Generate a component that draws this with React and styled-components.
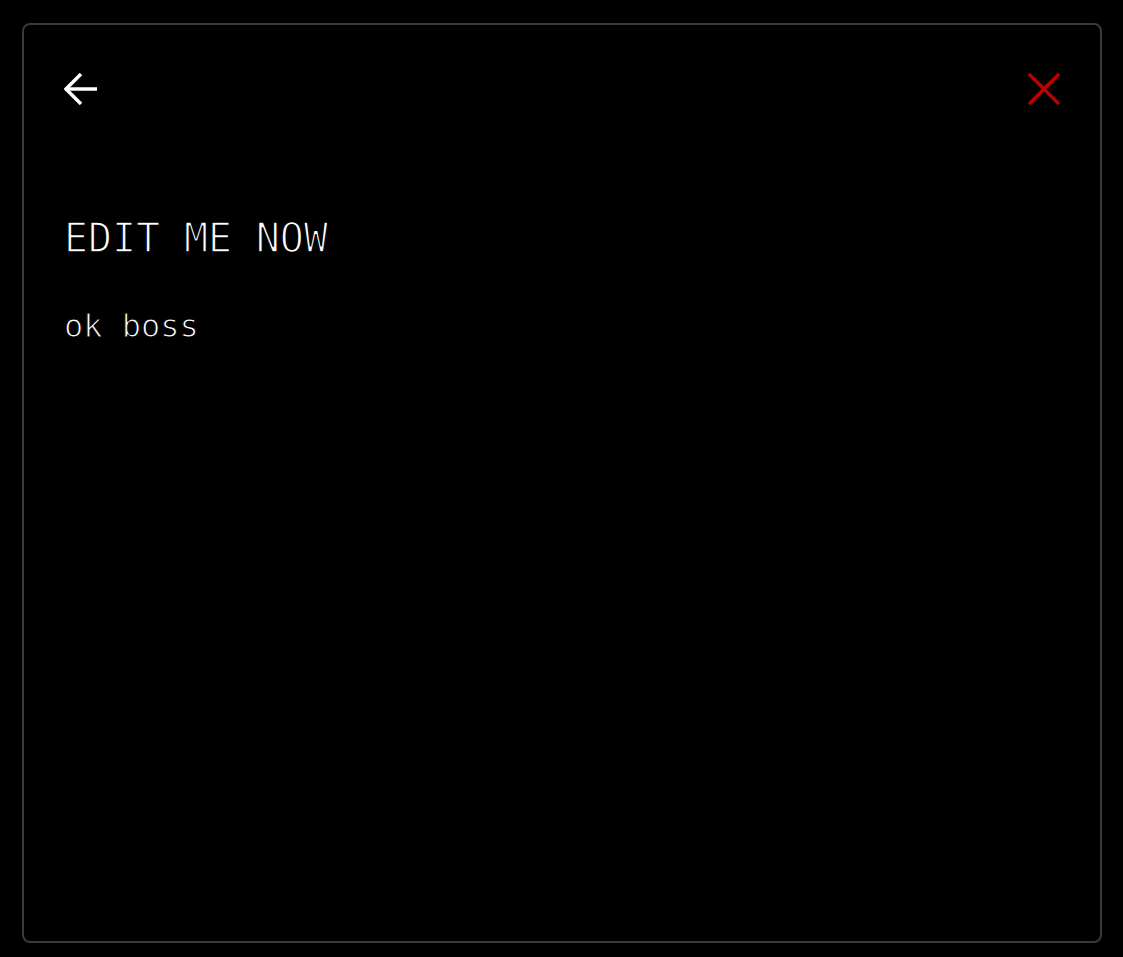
import React from "react";
import styled, { createGlobalStyle } from "styled-components";

const Global = createGlobalStyle`
  html, body { margin: 0; padding: 0; background: #000; }
  * { box-sizing: border-box; }
`;

const Page = styled.div`
  min-height: 100vh;
  padding: 23px 21px 14px 22px;
  background: #000;
  display: flex;
`;

const Card = styled.section`
  flex: 1;
  display: flex;
  flex-direction: column;
  border: 2px solid #3a3a3a;
  border-radius: 8px;
  background: #000;
  padding: 48px 38px;
  font-family: "DejaVu Sans Mono", "Liberation Mono", monospace;
  color: #fff;
`;

const Header = styled.header`
  display: flex;
  justify-content: space-between;
  align-items: center;
  padding: 0 2px;
`;

const IconButton = styled.button`
  background: none;
  border: 0;
  padding: 0;
  margin: 0;
  display: flex;
  cursor: pointer;
  color: ${(p) => p.$color};
`;

const Title = styled.h1`
  margin: 113px 0 0;
  padding-left: 2px;
  font-size: 40px;
  line-height: 40px;
  font-weight: 400;
  letter-spacing: -0.1px;
  -webkit-text-stroke: 1.4px #000;
`;

const Body = styled.p`
  margin: 52px 0 0;
  padding-left: 2px;
  font-size: 32px;
  line-height: 32px;
  font-weight: 400;
  letter-spacing: 0;
  -webkit-text-stroke: 1.1px #000;
`;

const ArrowLeft = () => (
  <svg width="33" height="32" viewBox="0 0 33 32" fill="none" stroke="currentColor" strokeWidth="3.5">
    <path d="M17 1 L2 16 L17 31" strokeLinejoin="miter" />
    <path d="M2.5 16 H33" />
  </svg>
);

const CloseX = () => (
  <svg width="32" height="32" viewBox="0 0 32 32" fill="none" stroke="currentColor" strokeWidth="3.4" strokeLinecap="round">
    <path d="M2 2 L30 30 M30 2 L2 30" />
  </svg>
);

export default function App() {
  return (
    <>
      <Global />
      <Page>
        <Card>
          <Header>
            <IconButton $color="#fff" aria-label="Back">
              <ArrowLeft />
            </IconButton>
            <IconButton $color="#c00000" aria-label="Close">
              <CloseX />
            </IconButton>
          </Header>
          <Title>EDIT ME NOW</Title>
          <Body>ok boss</Body>
        </Card>
      </Page>
    </>
  );
}
